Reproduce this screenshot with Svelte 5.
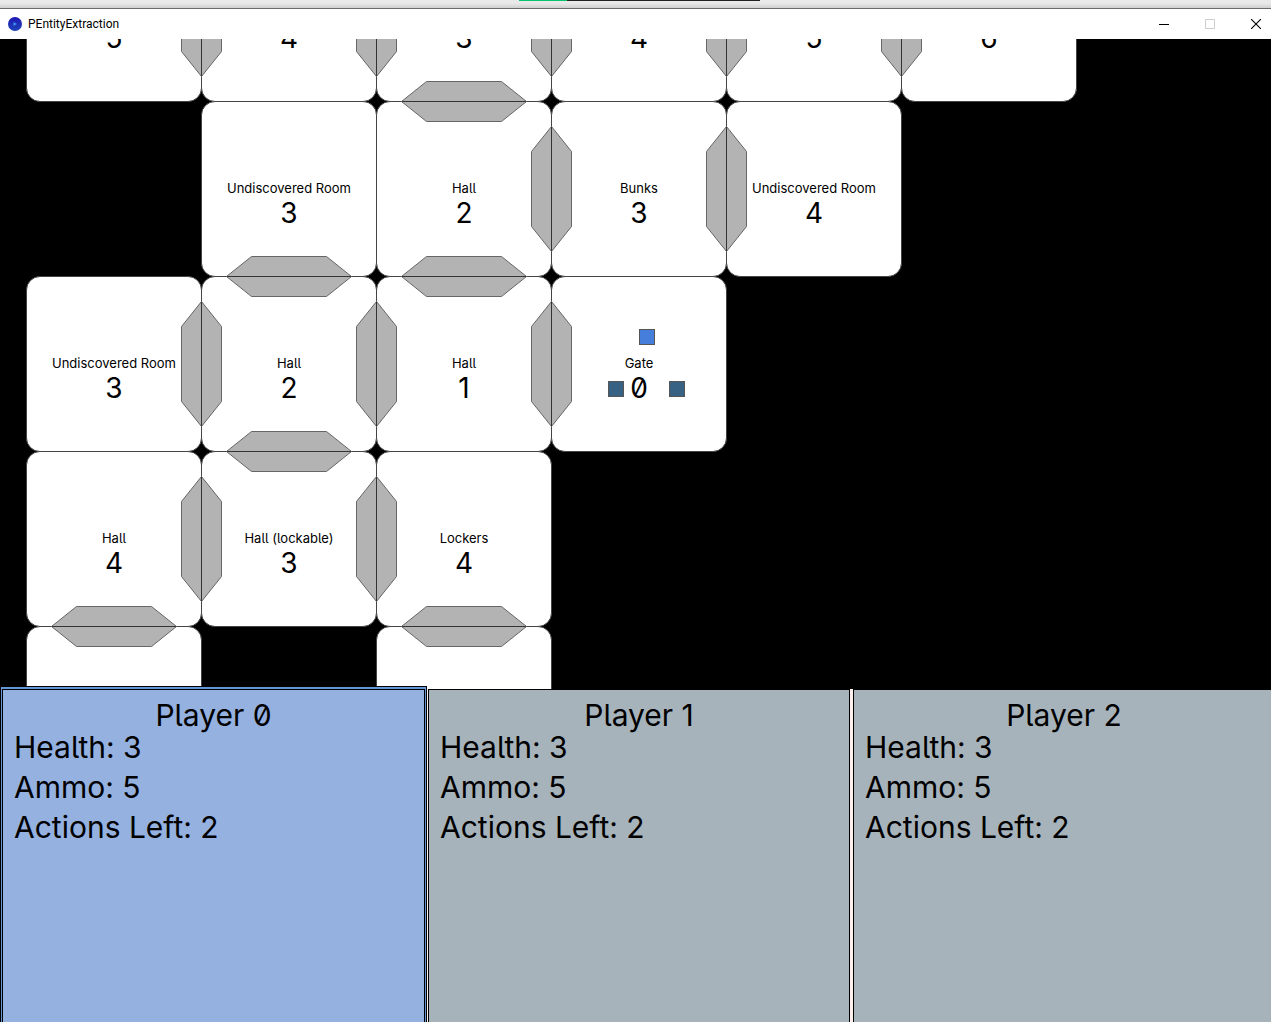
<script>
  const U = 'Undiscovered Room';
  // col and row are grid cells; value is the figure drawn under the name
  const rooms = [
    { col: 0, row: 0, name: '', value: 5 },
    { col: 1, row: 0, name: '', value: 4 },
    { col: 2, row: 0, name: '', value: 3 },
    { col: 3, row: 0, name: '', value: 4 },
    { col: 4, row: 0, name: '', value: 5 },
    { col: 5, row: 0, name: '', value: 6 },
    { col: 1, row: 1, name: U, value: 3 },
    { col: 2, row: 1, name: 'Hall', value: 2 },
    { col: 3, row: 1, name: 'Bunks', value: 3 },
    { col: 4, row: 1, name: U, value: 4 },
    { col: 0, row: 2, name: U, value: 3 },
    { col: 1, row: 2, name: 'Hall', value: 2 },
    { col: 2, row: 2, name: 'Hall', value: 1 },
    { col: 3, row: 2, name: 'Gate', value: 0 },
    { col: 0, row: 3, name: 'Hall', value: 4 },
    { col: 1, row: 3, name: 'Hall (lockable)', value: 3 },
    { col: 2, row: 3, name: 'Lockers', value: 4 },
    { col: 0, row: 4, name: '', value: '' },
    { col: 2, row: 4, name: '', value: '' }
  ];

  // doors on the left edge of a cell
  const sideDoors = [
    [1, 0], [2, 0], [3, 0], [4, 0], [5, 0],
    [3, 1], [4, 1],
    [1, 2], [2, 2], [3, 2],
    [1, 3], [2, 3]
  ];
  // doors on the top edge of a cell
  const topDoors = [[2, 1], [1, 2], [2, 2], [1, 3], [0, 4], [2, 4]];

  const tokens = [
    { x: 613, y: 403, fill: '#467edb' },
    { x: 582, y: 455, fill: '#386283' },
    { x: 643, y: 455, fill: '#386283' }
  ];

  const players = [0, 1, 2].map((id) => ({ id, health: 3, ammo: 5, actions: 2 }));
  const active = 0;
</script>

<div class="window">
  <div class="behind"><span class="progress"></span></div>
  <header>
    <svg class="logo" width="14" height="14" viewBox="0 0 14 14" aria-hidden="true">
      <defs>
        <linearGradient id="disc" x1="0" y1="0" x2="0" y2="1">
          <stop offset="0" stop-color="#1f18b4" />
          <stop offset="1" stop-color="#1c44b8" />
        </linearGradient>
      </defs>
      <circle cx="7" cy="7" r="7" fill="url(#disc)" />
      <path d="M5.5 5 9 7 5.5 9z" fill="#3f8df0" />
    </svg>
    <h1>PEntityExtraction</h1>
    <div class="controls">
      <button aria-label="Minimize">
        <svg width="10" height="10" viewBox="0 0 10 10"><path d="M0 5.5H10" stroke="#000" /></svg>
      </button>
      <button aria-label="Maximize" disabled>
        <svg width="10" height="10" viewBox="0 0 10 10"><path d="M.5 .5H9.5V9.5H.5z" fill="none" stroke="#ccc" /></svg>
      </button>
      <button aria-label="Close">
        <svg width="10" height="10" viewBox="0 0 10 10"><path d="M0 0 10 10M10 0 0 10" stroke="#000" stroke-width="1.1" /></svg>
      </button>
    </div>
  </header>

  <main>
    <div class="board">
      {#each rooms as room}
        <div class="room" style:grid-column={room.col + 1} style:grid-row={room.row + 1}>
          <span class="name">{room.name}</span>
          <span class="value">{room.value}</span>
        </div>
      {/each}
      <svg class="overlay" width="1052" height="876" viewBox="0 0 1052 876" aria-hidden="true">
        {#each sideDoors as [c, r]}
          <g transform="translate({c * 175} {r * 175})">
            <path class="door" d="M.5 25.5 20.5 50.5V125.5L.5 150.5-19.5 125.5V50.5z" />
            <path class="seam" d="M.5 26V150" />
          </g>
        {/each}
        {#each topDoors as [c, r]}
          <g transform="translate({c * 175} {r * 175})">
            <path class="door" d="M25.5 .5 50.5-19.5H125.5L150.5 .5 125.5 20.5H50.5z" />
            <path class="seam" d="M26 .5H150" />
          </g>
        {/each}
        {#each tokens as t}
          <rect class="token" x={t.x + 0.5} y={t.y + 0.5} width="15" height="15" fill={t.fill} />
        {/each}
      </svg>
    </div>
  </main>

  <div class="players">
    {#each players as p}
      <section class="player" class:active={p.id === active}>
        <div class="panel">
          <h2>Player {p.id}</h2>
          <p>Health: {p.health}</p>
          <p>Ammo: {p.ammo}</p>
          <p>Actions Left: {p.actions}</p>
        </div>
      </section>
    {/each}
  </div>
</div>

<style>
  :global(body) {
    margin: 0;
    background: #000;
  }
  .window {
    display: flex;
    flex-direction: column;
    min-height: 100vh;
    overflow: hidden;
    color: #000;
    font-family: Inter, 'Liberation Sans', sans-serif;
    font-feature-settings: 'zero', 'cv05';
  }
  .behind {
    display: flex;
    justify-content: center;
    height: 8px;
    border-bottom: 1px solid #6b6b6b;
    background: linear-gradient(#e9e9e9 40%, #cfcfcf);
  }
  .progress {
    width: 241px;
    height: 1px;
    margin-left: 8px;
    background: linear-gradient(90deg, #05c46b 20%, #222 20%);
  }
  header {
    display: flex;
    align-items: center;
    height: 30px;
    padding-left: 8px;
    background: #fff;
  }
  h1 {
    flex: 1;
    margin: 0 0 0 6px;
    font: 12px/16px Roboto, 'Liberation Sans', sans-serif;
  }
  .logo,
  button svg {
    display: block;
  }
  .controls {
    display: flex;
    align-self: stretch;
    margin-right: -8px;
  }
  button {
    display: grid;
    place-items: center;
    width: 46px;
    padding: 0;
    border: 0;
    background: none;
  }
  main {
    flex: 1 0 0;
    height: 0;
    overflow: hidden;
    background: #000;
  }
  .board {
    position: relative;
    display: grid;
    grid-template-columns: repeat(6, 175px);
    grid-auto-rows: 175px;
    margin: -113px 0 0 26px;
  }
  .room {
    display: flex;
    flex-direction: column;
    align-items: center;
    box-sizing: border-box;
    margin: 0 -1px -1px 0;
    padding-top: 77px;
    border: 1px solid #444;
    border-radius: 14px;
    background: #fff;
  }
  .name {
    height: 20px;
    font-size: 13px;
    line-height: 18px;
    white-space: nowrap;
  }
  .value {
    font-size: 28px;
    line-height: 28px;
  }
  .overlay {
    position: absolute;
    top: 0;
    left: 0;
    overflow: visible;
  }
  .door {
    fill: #b3b3b3;
    stroke: #666;
  }
  .seam {
    stroke: #333;
  }
  .token {
    stroke: #555;
  }
  .players {
    display: grid;
    grid-template-columns: repeat(3, 1fr);
    gap: 3px;
    min-height: 333px;
    margin-right: -4px;
    padding-left: 3px;
    background: #fff0ee;
  }
  .player {
    display: grid;
    border: 1px solid #000;
    border-bottom: 0;
    background: #a7b3bb;
  }
  .active {
    position: relative;
    margin: -3px -2px 0 -3px;
    background: #6397d8;
  }
  .panel {
    padding: 13px 11px 0;
  }
  .active .panel {
    margin: 2px 1px 0;
    border: 1px solid #000;
    border-bottom: 0;
    background: #94b1e0;
  }
  h2,
  p {
    margin: 0;
    font-size: 30px;
    font-weight: 400;
    line-height: 40px;
  }
  h2 {
    line-height: 24px;
    text-align: center;
  }
</style>
